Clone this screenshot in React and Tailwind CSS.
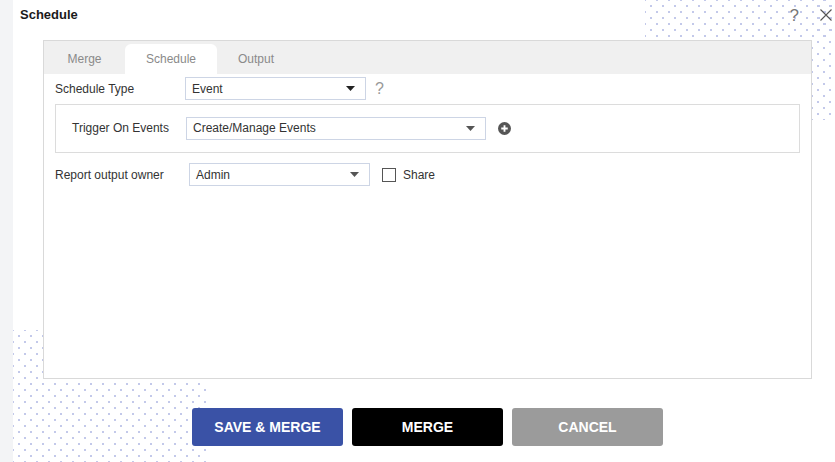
import { useState } from 'react';

const dots =
  'bg-[radial-gradient(circle,#c3c9ea_1px,transparent_1.3px),radial-gradient(circle,#c3c9ea_1px,transparent_1.3px)] bg-[length:12px_12px] bg-[position:0_0,6px_6px]';

function Caret({ color = '#333' }) {
  return (
    <svg width="9" height="5" viewBox="0 0 9 5">
      <path d="M0 0h9L4.5 5z" fill={color} />
    </svg>
  );
}

function Select({ value, width, caret }) {
  return (
    <div
      className={`flex items-center justify-between h-[23px] bg-white border border-[#cdd5e5] pl-[6px] pr-[10px] text-[12px] text-[#333] ${width}`}
    >
      <span>{value}</span>
      <Caret color={caret} />
    </div>
  );
}

export default function App() {
  const [tab, setTab] = useState('schedule');
  const [share, setShare] = useState(false);
  const tabs = [
    { label: 'Merge', value: 'merge', w: 'w-[81px]' },
    { label: 'Schedule', value: 'schedule', w: 'w-[92px]' },
    { label: 'Output', value: 'output', w: 'w-[78px]' },
  ];

  return (
    <div className="flex w-[835px] h-[462px] bg-white overflow-hidden font-['Liberation_Sans',Arial,sans-serif]">
      {/* left strip */}
      <div className="w-[13px] bg-[#f3f4f6]" />

      <div className="relative flex-1 flex flex-col">
        {/* decorative dot areas */}
        <div className={`absolute left-[632px] top-0 w-[190px] h-[40px] ${dots}`} />
        <div className={`absolute left-[799px] top-0 w-[23px] h-[120px] ${dots}`} />
        <div className={`absolute left-0 top-[330px] w-[193px] h-[132px] ${dots}`} />

        {/* header */}
        <div className="relative flex items-center h-[30px] pl-[7px] pr-[3px]">
          <span className="text-[13px] font-bold text-[#1a1a1a]">Schedule</span>
          <div className="flex-1" />
          <button className="text-[17px] leading-none text-[#777] mr-[21px]">?</button>
          <button className="text-[#555]">
            <svg width="12" height="12" viewBox="0 0 12 12">
              <path d="M0.5 0.5l11 11M11.5 0.5l-11 11" stroke="currentColor" strokeWidth="1.1" />
            </svg>
          </button>
        </div>

        {/* panel */}
        <div className="relative ml-[30px] mt-[10px] w-[769px] h-[339px] bg-white border border-[#d9d9d9]">
          <div className="flex items-end h-[33px] bg-[#f0f0f0] pt-[3px]">
            {tabs.map((t) => (
              <button
                key={t.value}
                onClick={() => setTab(t.value)}
                className={`${t.w} h-[30px] text-[12px] text-[#8a8a8a] ${
                  tab === t.value ? 'bg-white rounded-t-[6px]' : ''
                }`}
              >
                {t.label}
              </button>
            ))}
          </div>

          <div className="px-[11px] pt-[3px] text-[12px] text-[#333]">
            <div className="flex items-center h-[23px]">
              <span className="w-[130px]">Schedule Type</span>
              <Select value="Event" width="w-[181px]" caret="#222" />
              <span className="ml-[9px] text-[16px] leading-none text-[#999]">?</span>
            </div>

            <div className="mt-[4px] flex items-center h-[49px] w-[745px] border border-[#dcdcdc] pl-[16px] pb-[1px]">
              <span className="w-[114px]">Trigger On Events</span>
              <Select value="Create/Manage Events" width="w-[300px]" caret="#555" />
              <svg className="ml-[12px]" width="13" height="13" viewBox="0 0 14 14">
                <circle cx="7" cy="7" r="7" fill="#555" />
                <path d="M7 3.5v7M3.5 7h7" stroke="#fff" strokeWidth="2" />
              </svg>
            </div>

            <div className="mt-[10px] flex items-center h-[23px]">
              <span className="w-[134px]">Report output owner</span>
              <Select value="Admin" width="w-[181px]" caret="#555" />
              <button
                onClick={() => setShare((s) => !s)}
                className="ml-[12px] w-[14px] h-[14px] border border-[#555] bg-white"
              />
              <span className="ml-[7px]">Share</span>
            </div>
          </div>
        </div>

        {/* footer buttons */}
        <div className="relative mt-[29px] ml-[30px] w-[769px] flex justify-center gap-[9px]">
          <button className="w-[151px] h-[38px] rounded-[3px] bg-[#3a52a6] text-white text-[14px] font-bold">
            SAVE &amp; MERGE
          </button>
          <button className="w-[151px] h-[38px] rounded-[3px] bg-black text-white text-[14px] font-bold">
            MERGE
          </button>
          <button className="w-[151px] h-[38px] rounded-[3px] bg-[#9b9b9b] text-white text-[14px] font-bold">
            CANCEL
          </button>
        </div>
      </div>
    </div>
  );
}
